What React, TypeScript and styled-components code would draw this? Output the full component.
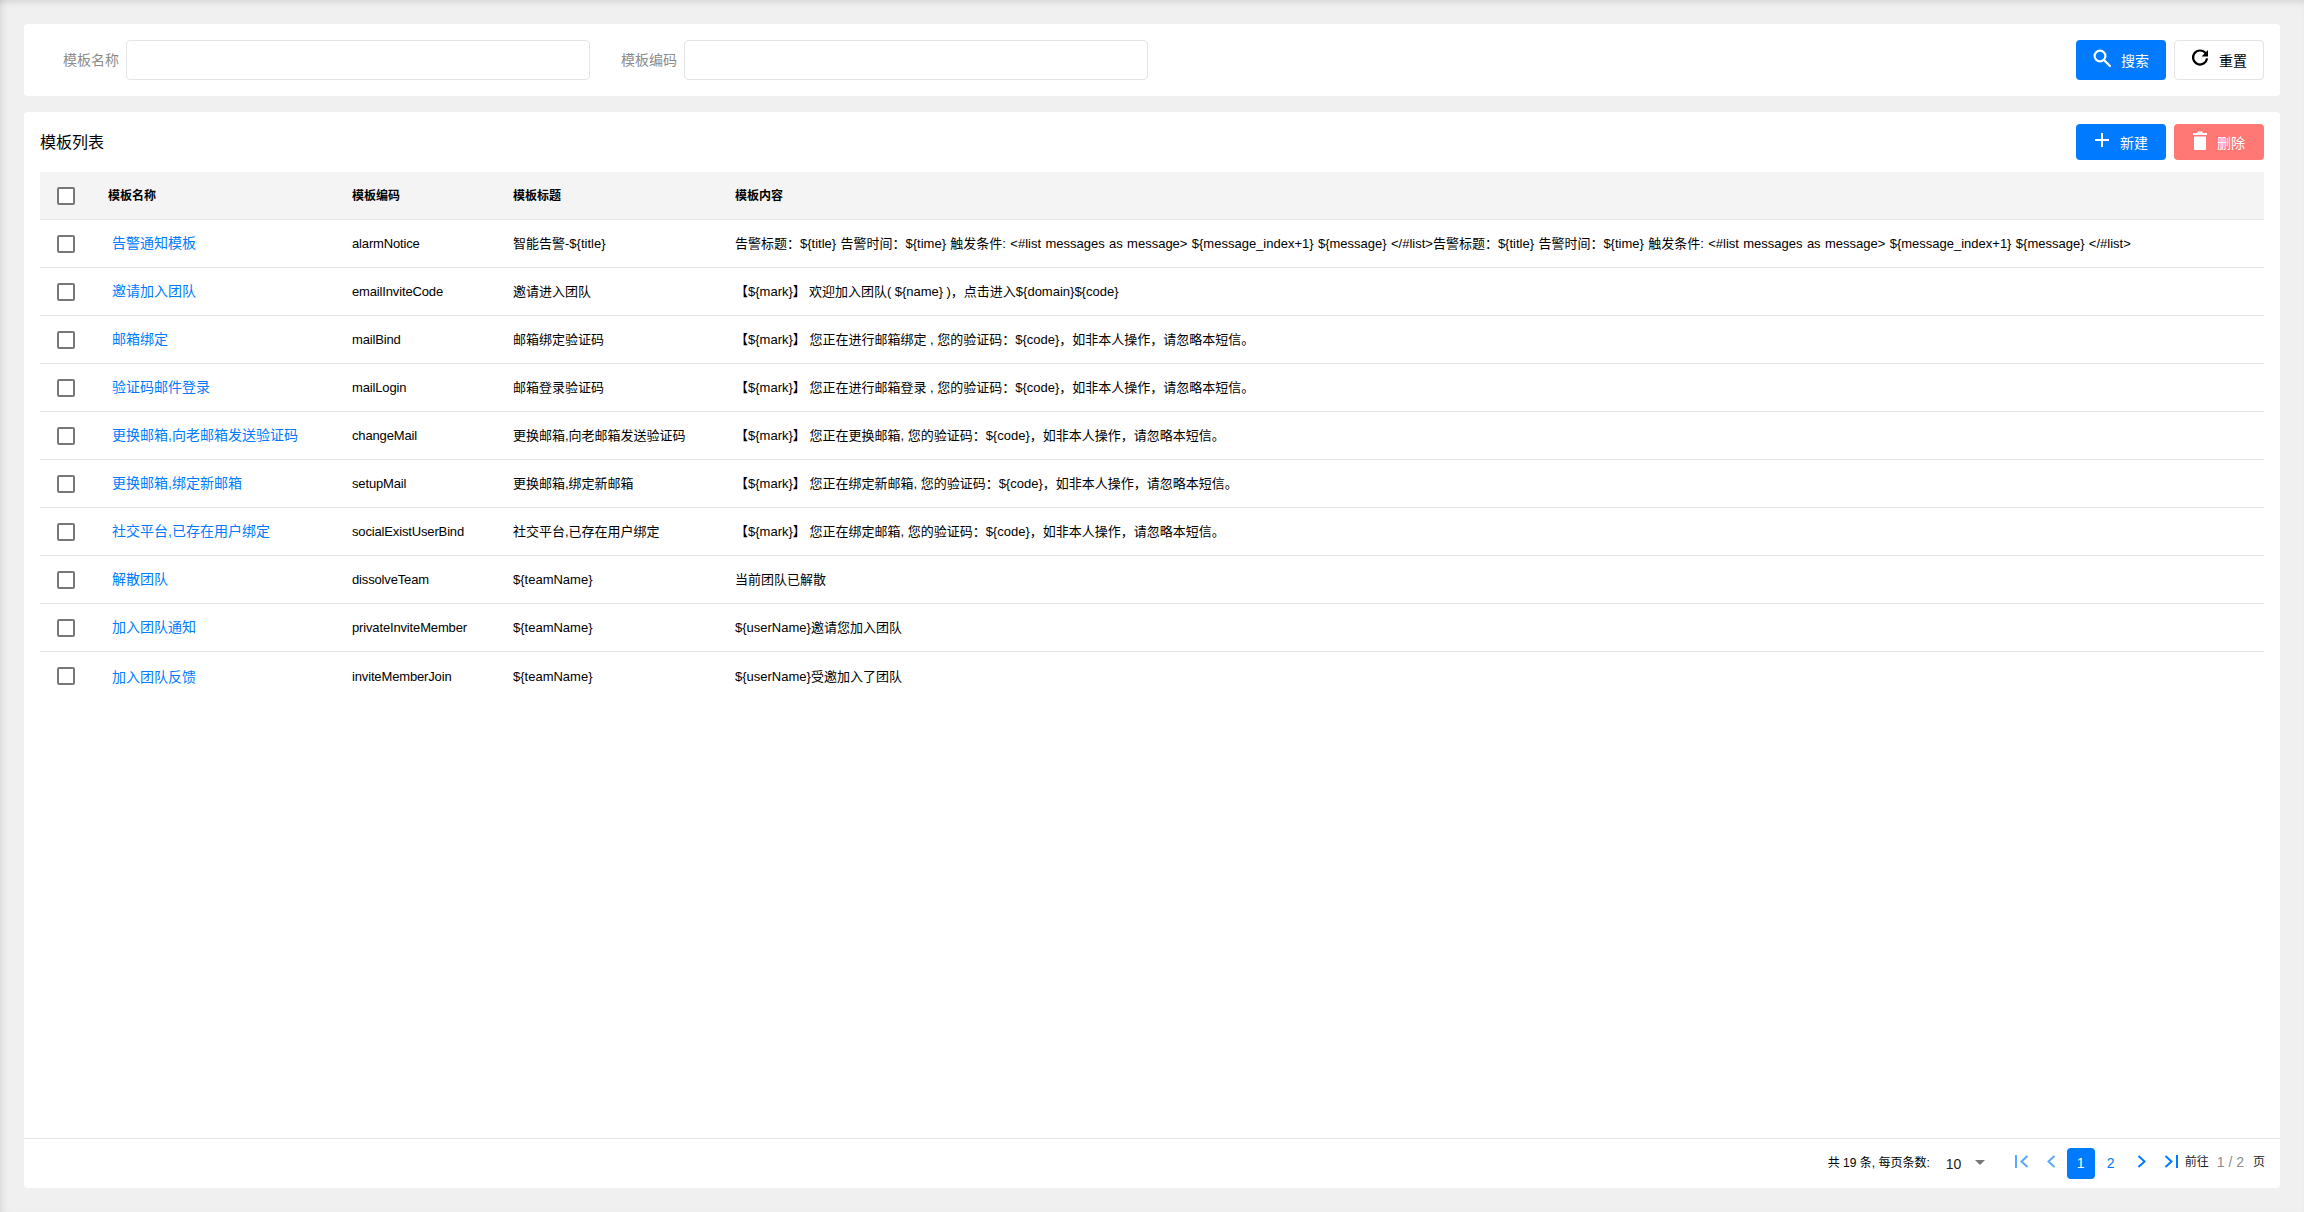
import React from "react";
import styled, { createGlobalStyle } from "styled-components";

const Global = createGlobalStyle`
  html, body { margin: 0; padding: 0; height: 100%; background: #f0f0f0; }
  body {
    font-family: "Liberation Sans", "Noto Sans CJK SC", Arial, sans-serif;
    color: #000;
    line-height: 20px;
    text-rendering: optimizeSpeed;
  }
`;

const Page = styled.div`
  box-sizing: border-box;
  width: 2304px;
  height: 1212px;
  padding: 24px;
  display: flex;
  flex-direction: column;
  gap: 16px;
  overflow: hidden;
  background: #f0f0f0;
  box-shadow: inset 7px 0 8px -6px rgba(0, 0, 0, 0.12), inset 0 7px 8px -6px rgba(0, 0, 0, 0.14);
`;

const Card = styled.section`
  background: #fff;
  border-radius: 4px;
`;

const SearchCard = styled(Card)`
  box-sizing: border-box;
  height: 72px;
  padding: 16px 16px 16px 0;
  display: flex;
  align-items: center;
`;

const Field = styled.label`
  display: flex;
  align-items: center;
  gap: 6px;
  margin-left: 39px;
  & + & { margin-left: 31px; }
`;

const FieldLabel = styled.span`
  width: 57px;
  font-size: 14px;
  color: #8c8c8c;
  white-space: nowrap;
`;

const TextInput = styled.input`
  box-sizing: border-box;
  width: 464px;
  height: 40px;
  border: 1px solid #e4e4e4;
  border-radius: 4px;
  background: #fff;
  outline: none;
`;

const Spacer = styled.div`
  flex: 1;
`;

const Actions = styled.div`
  display: flex;
  gap: 8px;
`;

const Button = styled.button<{ $kind: "primary" | "plain" | "danger"; $h: number }>`
  box-sizing: border-box;
  width: 90px;
  height: ${(p) => p.$h}px;
  padding: 0;
  display: flex;
  align-items: center;
  justify-content: center;
  gap: 10px;
  border-radius: 4px;
  font-family: inherit;
  font-size: 14px;
  border: ${(p) => (p.$kind === "plain" ? "1px solid #e4e4e4" : "none")};
  color: ${(p) => (p.$kind === "plain" ? "#000" : "#fff")};
  background: ${(p) => (p.$kind === "plain" ? "#fff" : p.$kind === "danger" ? "#ff7875" : "#007bff")};

  svg {
    margin-bottom: 4px;
  }
`;

const ListCard = styled(Card)`
  flex: 1;
  min-height: 0;
  display: flex;
  flex-direction: column;
`;

const ListHead = styled.div`
  box-sizing: border-box;
  height: 60px;
  padding: 12px 16px;
  display: flex;
  align-items: center;
  justify-content: space-between;
`;

const ListTitle = styled.h2`
  margin: 2px 0 0;
  font-size: 16px;
  font-weight: 400;
`;

const TableWrap = styled.div`
  flex: 1;
  min-height: 0;
  padding: 0 16px;
`;

const Table = styled.table`
  width: 100%;
  border-collapse: separate;
  border-spacing: 0;
  table-layout: fixed;
`;

const HeadCell = styled.th<{ $w?: number }>`
  box-sizing: border-box;
  height: 48px;
  padding: 0;
  width: ${(p) => (p.$w ? `${p.$w}px` : "auto")};
  background: #f4f4f4;
  border-bottom: 1px solid #e4e4e4;
  font-size: 12px;
  font-weight: 700;
  text-align: left;
  white-space: nowrap;
`;

const Cell = styled.td`
  box-sizing: border-box;
  height: 48px;
  padding: 0;
  border-bottom: 1px solid #e4e4e4;
  font-size: 13px;
  white-space: nowrap;
  overflow: visible;

  tr:last-child & {
    height: 50px;
    border-bottom: none;
  }
`;

const CheckWrap = styled.div`
  display: flex;
  justify-content: flex-start;
  padding-left: 17px;

  tbody tr:last-child & {
    margin-bottom: 2px;
  }
`;

const Check = styled.span`
  box-sizing: border-box;
  display: block;
  width: 18px;
  height: 18px;
  border: 2px solid #777;
  border-radius: 2px;
  background: #fff;
`;

const NameLink = styled.a`
  margin-left: 4px;
  font-size: 14px;
  color: #007bff;
  text-decoration: none;
`;

const CodeText = styled.span`
  letter-spacing: -0.15px;
`;

const ContentText = styled.span<{ $ws?: number }>`
  word-spacing: ${(p) => p.$ws ?? 0}px;
`;

const Footer = styled.footer`
  box-sizing: border-box;
  height: 50px;
  border-top: 1px solid #e4e4e4;
  padding: 9px 15px 0 0;
  display: flex;
  justify-content: flex-end;
  align-items: flex-start;
  font-size: 12px;
`;

const Summary = styled.span`
  margin-top: 5px;
  width: 118px;
  white-space: nowrap;
`;

const Size = styled.span`
  margin-top: 6px;
  width: 29px;
  font-size: 14px;
  color: #222;
`;

const Caret = styled.span`
  width: 0;
  height: 0;
  margin: 12px 30px 0 0;
  border-left: 5px solid transparent;
  border-right: 5px solid transparent;
  border-top: 5px solid #777;
`;

const PageIcon = styled.span<{ $w: number; $pl?: number; $light?: boolean }>`
  box-sizing: border-box;
  width: ${(p) => p.$w}px;
  padding-left: ${(p) => p.$pl ?? 0}px;
  height: 31px;
  display: flex;
  align-items: center;
  justify-content: center;
  color: #007bff;
  opacity: ${(p) => (p.$light ? 0.65 : 1)};
  margin-top: -2px;
`;

const PageNum = styled.span<{ $active?: boolean }>`
  box-sizing: border-box;
  width: ${(p) => (p.$active ? 28 : 32)}px;
  height: 31px;
  padding-bottom: 2px;
  border-radius: 4px;
  display: flex;
  align-items: center;
  justify-content: center;
  font-size: 14px;
  color: ${(p) => (p.$active ? "#fff" : "#007bff")};
  background: ${(p) => (p.$active ? "#007bff" : "transparent")};
`;

const Jump = styled.span`
  margin-top: 4px;
  display: flex;
  font-size: 12px;
  white-space: nowrap;
  color: #222;
`;

const JumpValue = styled.span`
  margin: 0 9px 0 8px;
  color: #8c8c8c;
  font-size: 14px;
`;

const Svg = styled.svg`
  display: block;
  flex: none;
`;

const SearchIcon = () => (
  <Svg width="18" height="18" viewBox="0 0 18 18" fill="none" stroke="currentColor" strokeWidth="2.2">
    <circle cx="7" cy="7" r="5.4" />
    <path d="M11 11l6 6" strokeLinecap="round" />
  </Svg>
);

const ReloadIcon = () => (
  <Svg width="18" height="18" viewBox="0 0 18 18" fill="none">
    <path d="M14.6 4.2A7 7 0 1 0 16 9.4" stroke="currentColor" strokeWidth="2.2" />
    <path d="M17 1v6.4h-6.4z" fill="currentColor" />
  </Svg>
);

const PlusIcon = () => (
  <Svg width="16" height="16" viewBox="0 0 16 16" fill="none" stroke="currentColor" strokeWidth="2">
    <path d="M8 1v14M1 8h14" />
  </Svg>
);

const TrashIcon = () => (
  <Svg width="14" height="19" viewBox="0 0 14 19" fill="currentColor">
    <path d="M0 2h4.5V0.5h5V2H14v2H0zM1 5.5h12V18a1 1 0 0 1-1 1H2a1 1 0 0 1-1-1z" />
  </Svg>
);

const Chevron = ({ dir, bar }: { dir: "l" | "r"; bar?: boolean }) => (
  <Svg width={bar ? 14 : 9} height="13" viewBox={bar ? "0 0 14 13" : "0 0 9 13"} fill="none" stroke="currentColor" strokeWidth="2">
    {bar ? (
      dir === "l" ? (
        <path d="M1 0v13M12.5 1L6.5 6.5l6 5.5" />
      ) : (
        <path d="M13 0v13M1.5 1l6 5.5-6 5.5" />
      )
    ) : dir === "l" ? (
      <path d="M7.5 1L1.5 6.5l6 5.5" />
    ) : (
      <path d="M1.5 1l6 5.5-6 5.5" />
    )}
  </Svg>
);

const alarm =
  "告警标题：${title} 告警时间：${time} 触发条件: <#list messages as message> ${message_index+1} ${message} </#list>";
const verify = (a: string, sep: string) =>
  "【${mark}】 您正在" + a + sep + "您的验证码：${code}，如非本人操作，请忽略本短信。";

const rows: { name: string; code: string; title: string; content: string; ws?: number }[] = [
  { name: "告警通知模板", code: "alarmNotice", title: "智能告警-${title}", content: alarm + alarm, ws: 0.75 },
  {
    name: "邀请加入团队",
    code: "emailInviteCode",
    title: "邀请进入团队",
    content: "【${mark}】 欢迎加入团队( ${name} )，点击进入${domain}${code}",
    ws: -0.3,
  },
  { name: "邮箱绑定", code: "mailBind", title: "邮箱绑定验证码", content: verify("进行邮箱绑定", " , ") },
  { name: "验证码邮件登录", code: "mailLogin", title: "邮箱登录验证码", content: verify("进行邮箱登录", " , ") },
  {
    name: "更换邮箱,向老邮箱发送验证码",
    code: "changeMail",
    title: "更换邮箱,向老邮箱发送验证码",
    content: verify("更换邮箱", ", "),
  },
  { name: "更换邮箱,绑定新邮箱", code: "setupMail", title: "更换邮箱,绑定新邮箱", content: verify("绑定新邮箱", ", ") },
  {
    name: "社交平台,已存在用户绑定",
    code: "socialExistUserBind",
    title: "社交平台,已存在用户绑定",
    content: verify("绑定邮箱", ", "),
  },
  { name: "解散团队", code: "dissolveTeam", title: "${teamName}", content: "当前团队已解散" },
  { name: "加入团队通知", code: "privateInviteMember", title: "${teamName}", content: "${userName}邀请您加入团队" },
  { name: "加入团队反馈", code: "inviteMemberJoin", title: "${teamName}", content: "${userName}受邀加入了团队" },
];

export default function App() {
  return (
    <>
      <Global />
      <Page>
        <SearchCard>
          <Field>
            <FieldLabel>模板名称</FieldLabel>
            <TextInput />
          </Field>
          <Field>
            <FieldLabel>模板编码</FieldLabel>
            <TextInput />
          </Field>
          <Spacer />
          <Actions>
            <Button $kind="primary" $h={40}>
              <SearchIcon />
              搜索
            </Button>
            <Button $kind="plain" $h={40}>
              <ReloadIcon />
              重置
            </Button>
          </Actions>
        </SearchCard>
        <ListCard>
          <ListHead>
            <ListTitle>模板列表</ListTitle>
            <Actions>
              <Button $kind="primary" $h={36}>
                <PlusIcon />
                新建
              </Button>
              <Button $kind="danger" $h={36}>
                <TrashIcon />
                删除
              </Button>
            </Actions>
          </ListHead>
          <TableWrap>
            <Table>
              <thead>
                <tr>
                  <HeadCell $w={68}>
                    <CheckWrap>
                      <Check />
                    </CheckWrap>
                  </HeadCell>
                  <HeadCell $w={244}>模板名称</HeadCell>
                  <HeadCell $w={161}>模板编码</HeadCell>
                  <HeadCell $w={222}>模板标题</HeadCell>
                  <HeadCell>模板内容</HeadCell>
                </tr>
              </thead>
              <tbody>
                {rows.map((r) => (
                  <tr key={r.code}>
                    <Cell>
                      <CheckWrap>
                        <Check />
                      </CheckWrap>
                    </Cell>
                    <Cell>
                      <NameLink>{r.name}</NameLink>
                    </Cell>
                    <Cell>
                      <CodeText>{r.code}</CodeText>
                    </Cell>
                    <Cell>{r.title}</Cell>
                    <Cell>
                      <ContentText $ws={r.ws}>{r.content}</ContentText>
                    </Cell>
                  </tr>
                ))}
              </tbody>
            </Table>
          </TableWrap>
          <Footer>
            <Summary>共 19 条, 每页条数:</Summary>
            <Size>10</Size>
            <Caret />
            <PageIcon $w={14} $light>
              <Chevron dir="l" bar />
            </PageIcon>
            <PageIcon $w={38} $pl={8} $light>
              <Chevron dir="l" />
            </PageIcon>
            <PageNum $active>1</PageNum>
            <PageNum>2</PageNum>
            <PageIcon $w={30}>
              <Chevron dir="r" />
            </PageIcon>
            <PageIcon $w={28}>
              <Chevron dir="r" bar />
            </PageIcon>
            <Jump>
              前往
              <JumpValue>1 / 2</JumpValue>页
            </Jump>
          </Footer>
        </ListCard>
      </Page>
    </>
  );
}
